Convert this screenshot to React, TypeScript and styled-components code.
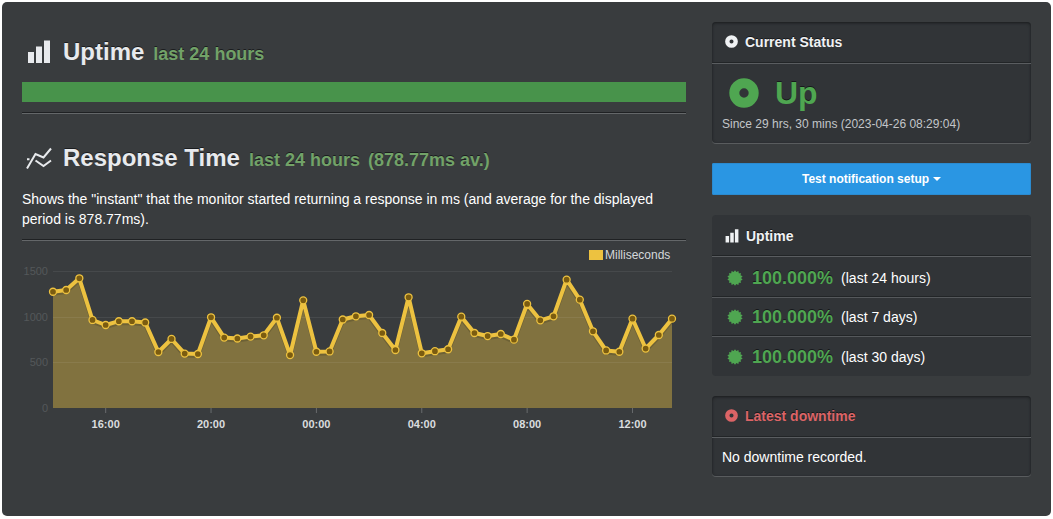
import React, { ReactNode } from "react";
import styled, { createGlobalStyle } from "styled-components";

const GlobalStyle = createGlobalStyle`
  * { box-sizing: border-box; }
  body {
    margin: 0;
    background: #fff;
    color: #fff;
    font: 14px/20px "Liberation Sans", Arial, sans-serif;
  }
  h1, h2, h3, p { margin: 0; }
`;

const Page = styled.main`
  display: grid;
  grid-template-columns: minmax(0, 664fr) minmax(0, 319fr);
  gap: 26px;
  align-items: start;
  margin: 2px;
  padding: 20px 20px 40px;
  border-radius: 5px;
  background: #393c3e;
`;

const Column = styled.div<{ $gap: number }>`
  display: flex;
  flex-direction: column;
  gap: ${(p) => p.$gap}px;
`;

const Section = styled.section<{ $top: number }>`
  padding-top: ${(p) => p.$top}px;
`;

const Title = styled.h1`
  display: flex;
  align-items: center;
  height: 40px;
  padding-top: 2px;
  font-size: 24px;
  line-height: 38px;
  color: #e8eaed;
  text-shadow: 0 -1px 0 #1b1d1f;

  svg { margin: 0 11px 0 4px; }
`;

const TitleLine = styled.span`
  display: flex;
  align-items: baseline;
`;

const TitleText = styled.span`
  margin-right: 1px;
  white-space: nowrap;
`;

const Sub = styled.small`
  margin-left: 8px;
  font-size: 18px;
  color: #72a268;
`;

const UptimeBar = styled.div`
  height: 20px;
  margin-top: 10px;
  background: #48934b;
`;

const Rule = styled.hr`
  height: 2px;
  margin: 10px 0 0;
  border: 0;
  border-top: 1px solid #1f2123;
  border-bottom: 1px solid #646769;
`;

const Description = styled.p`
  padding-top: 11px;
`;

const Chart = styled.svg`
  display: block;
  width: 100%;
  height: auto;
  overflow: visible;
  font-size: 11px;
`;

const Card = styled.section<{ $inset?: boolean }>`
  border-radius: 4px;
  background: #313437;
  box-shadow: ${(p) =>
    p.$inset ? "inset 0 1px 3px #191b1d, 0 1px 0 #595c5e" : "none"};
`;

const CardHead = styled.h2<{ $color?: string; $raised?: boolean }>`
  display: flex;
  align-items: center;
  gap: 7px;
  height: 42px;
  padding: 0 13px ${(p) => (p.$raised ? 2 : 0)}px;
  border-bottom: 1px solid #5a5d60;
  box-shadow: inset 0 -1px 0 #222527;
  font-size: 14px;
  color: ${(p) => p.$color ?? "#f0f2f4"};
  text-shadow: 0 -1px 0 #17191b;
`;

const StatusBody = styled.div`
  padding: 9px 10px;
`;

const StatusLine = styled.div`
  display: flex;
  align-items: center;
  gap: 16px;
  height: 40px;
  padding-left: 7px;
  font-size: 32px;
  font-weight: bold;
  color: #4fa651;
  text-shadow: 0 -1px 0 #17191b;
`;

const Since = styled.p`
  padding-top: 1px;
  font-size: 12px;
  color: #c3c6c9;
`;

const NotifyButton = styled.button`
  display: flex;
  align-items: center;
  justify-content: center;
  gap: 4px;
  height: 32px;
  border: 0;
  border-radius: 2px;
  background: #2a96e3;
  box-shadow: inset 0 0 0 1px #2b8bd0;
  color: #fff;
  font: bold 12px/20px "Liberation Sans", Arial, sans-serif;
  cursor: pointer;
`;

const UptimeList = styled.ul`
  margin: 0;
  padding: 2px 0 0;
  list-style: none;
`;

const UptimeRow = styled.li`
  display: flex;
  align-items: center;
  height: 39px;
  padding-left: 15px;

  &:not(:last-child) {
    border-bottom: 1px solid #55585b;
    box-shadow: inset 0 -1px 0 #222527;
  }
`;

const Percent = styled.strong`
  margin: 0 8px 0 9px;
  font-size: 18px;
  color: #4fa651;
  text-shadow: 0 -1px 0 #17191b;
`;

const CardText = styled.p`
  padding: 9px 10px;
`;

const BarsIcon = ({ size, pad = 0 }: { size: number; pad?: number }) => (
  <svg
    width={size}
    height={size}
    viewBox={`${-pad} 0 ${24 + 2 * pad} ${24 + 2 * pad}`}
    fill="currentColor"
    aria-hidden="true"
  >
    <path d="M1 12h6v11H1zM9 6.500h6V23H9zM17 .5h6V23h-6z" />
  </svg>
);

const TrendIcon = () => (
  <svg width="26" height="24" viewBox="0 0 26 24" fill="none" stroke="currentColor" strokeWidth="2" aria-hidden="true">
    <path d="M1 21.500 9.500 7l8 3.500L25 1.500" />
    <path d="M1 12.200h2.500M9.500 13.500l8 5.500L25 13.500" />
  </svg>
);

const RingIcon = ({ size }: { size: number }) => (
  <svg width={size} height={size} viewBox="0 0 30 30" aria-hidden="true">
    <circle cx="15" cy="15" r="9.700" fill="none" stroke="currentColor" strokeWidth="10" />
  </svg>
);

const SEAL = Array.from({ length: 28 }, (_, i) => {
  const r = i % 2 ? 6.1 : 7.8;
  const a = (i * Math.PI) / 14;
  return `${(8 + r * Math.sin(a)).toFixed(2)},${(8 - r * Math.cos(a)).toFixed(2)}`;
}).join(" ");

const SealIcon = () => (
  <svg width="16" height="16" viewBox="0 0 16 16" fill="#4fa651" aria-hidden="true">
    <polygon points={SEAL} />
  </svg>
);

const SAMPLES = [
  1273, 1292, 1420, 964, 909, 950, 950, 936, 613, 756, 596, 591, 993, 771, 761,
  782, 796, 988, 580, 1179, 616, 619, 969, 1004, 1018, 821, 635, 1212, 599, 622,
  643, 1000, 821, 788, 810, 748, 1139, 960, 1004, 1405, 1186, 840, 630, 616,
  978, 651, 799, 978,
];
const X0 = 31;
const X1 = 650;
const BASE = 167;
const px = (i: number) => X0 + (i * (X1 - X0)) / (SAMPLES.length - 1);
const py = (v: number) => BASE - (v * 137) / 1500;
const LINE = SAMPLES.map((v, i) => `${px(i).toFixed(1)},${py(v).toFixed(1)}`).join(" ");
const HOURS = ["16:00", "20:00", "00:00", "04:00", "08:00", "12:00"];

const ResponseChart = () => (
  <Chart viewBox="0 0 664 195" role="img" aria-label="Response time in milliseconds">
    <rect x="567" y="9" width="14" height="10" fill="#edc240" />
    <text x="583" y="18" fontSize="12" fill="#d5d8da">Milliseconds</text>
    {[0, 500, 1000, 1500].map((v) => (
      <text key={v} x="26" y={py(v) + 4} textAnchor="end" fill="#54585a">{v}</text>
    ))}
    <polygon points={`${X0},${BASE} ${LINE} ${X1},${BASE}`} fill="#edc240" fillOpacity="0.4" />
    {[500, 1000, 1500].map((v) => (
      <line key={v} x1={X0} x2={X1} y1={Math.round(py(v)) + 0.5} y2={Math.round(py(v)) + 0.5} stroke="#fff" strokeOpacity="0.07" />
    ))}
    {HOURS.map((h, k) => (
      <g key={h}>
        <line x1={px(4 + 8 * k)} x2={px(4 + 8 * k)} y1={BASE} y2={BASE + 5} stroke="#686b6d" />
        <text x={px(4 + 8 * k)} y="187" textAnchor="middle" fontWeight="bold" fill="#dadddf">{h}</text>
      </g>
    ))}
    <polyline points={LINE} transform="translate(0 2)" fill="none" stroke="#000" strokeOpacity="0.15" strokeWidth="4" strokeLinejoin="round" />
    <polyline points={LINE} fill="none" stroke="#edc240" strokeWidth="4" strokeLinejoin="round" />
    {SAMPLES.map((v, i) => (
      <circle key={i} cx={px(i)} cy={py(v)} r="3.500" fill="#7b5c10" stroke="#edc240" strokeWidth="1.300" />
    ))}
  </Chart>
);

const Heading = ({ icon, text, children }: { icon: ReactNode; text: string; children: ReactNode }) => (
  <Title>
    {icon}
    <TitleLine>
      <TitleText>{text}</TitleText>
      {children}
    </TitleLine>
  </Title>
);

const PERIODS = ["24 hours", "7 days", "30 days"];

export default function App() {
  return (
    <>
      <GlobalStyle />
      <Page>
        <Column $gap={0}>
          <Section $top={10}>
            <Heading icon={<BarsIcon size={26} pad={1} />} text="Uptime">
              <Sub>last 24 hours</Sub>
            </Heading>
            <UptimeBar />
            <Rule />
          </Section>
          <Section $top={24}>
            <Heading icon={<TrendIcon />} text="Response Time">
              <Sub>last 24 hours</Sub>
              <Sub>(878.77ms av.)</Sub>
            </Heading>
            <Description>
              Shows the "instant" that the monitor started returning a response in ms (and average
              for the displayed period is 878.77ms).
            </Description>
            <Rule />
            <ResponseChart />
          </Section>
        </Column>
        <Column $gap={20}>
          <Card $inset>
            <CardHead $raised><RingIcon size={13} />Current Status</CardHead>
            <StatusBody>
              <StatusLine><RingIcon size={30} />Up</StatusLine>
              <Since>Since 29 hrs, 30 mins (2023-04-26 08:29:04)</Since>
            </StatusBody>
          </Card>
          <NotifyButton type="button">
            Test notification setup
            <svg width="8" height="4" viewBox="0 0 8 4" fill="currentColor" aria-hidden="true">
              <path d="M0 0h8L4 4z" />
            </svg>
          </NotifyButton>
          <Card>
            <CardHead><BarsIcon size={14} />Uptime</CardHead>
            <UptimeList>
              {PERIODS.map((p) => (
                <UptimeRow key={p}>
                  <SealIcon />
                  <Percent>100.000%</Percent>
                  <span>{`(last ${p})`}</span>
                </UptimeRow>
              ))}
            </UptimeList>
          </Card>
          <Card $inset>
            <CardHead $raised $color="#dc6466"><RingIcon size={13} />Latest downtime</CardHead>
            <CardText>No downtime recorded.</CardText>
          </Card>
        </Column>
      </Page>
    </>
  );
}
